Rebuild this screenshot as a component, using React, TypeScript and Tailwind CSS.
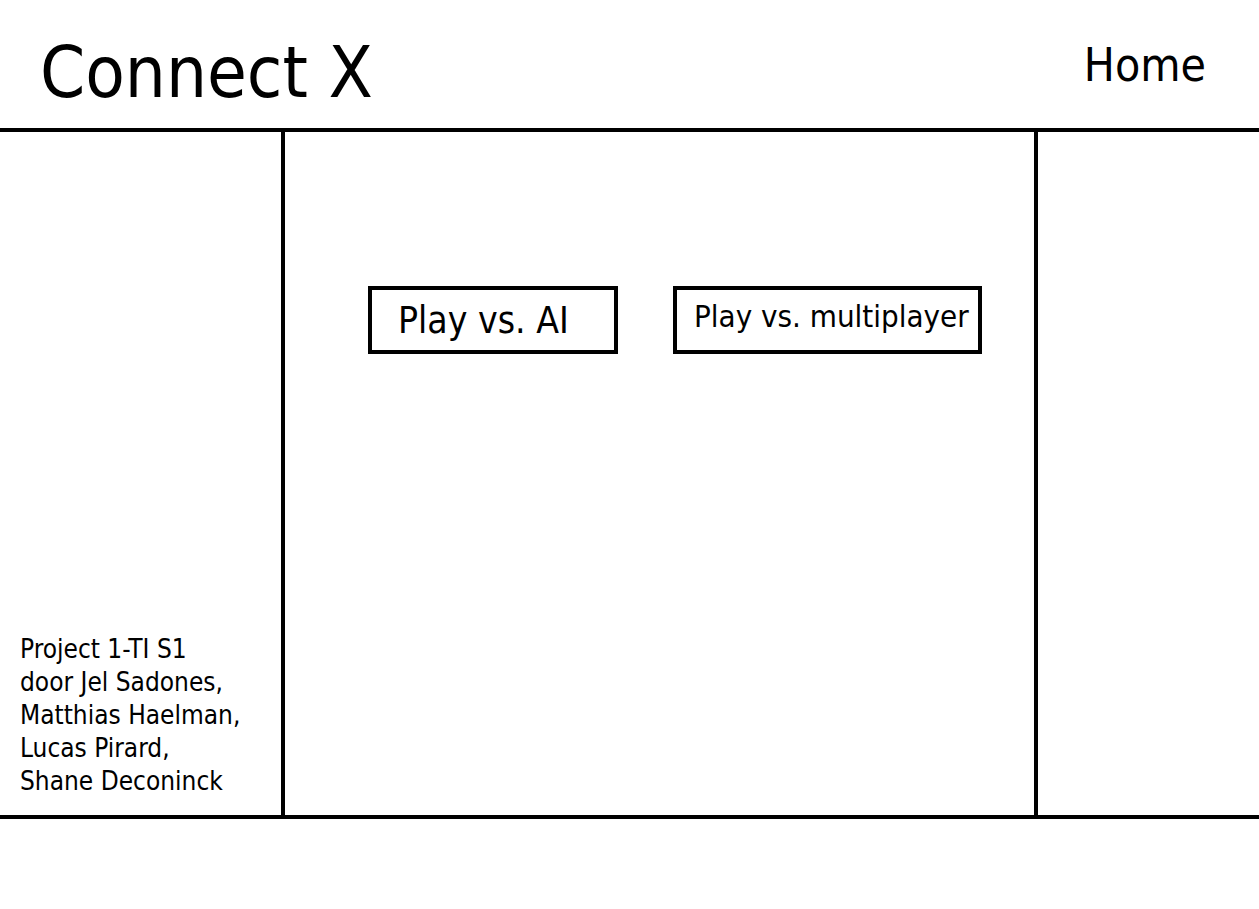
const font = { fontFamily: '"DejaVu Sans Condensed", "DejaVu Sans", Tahoma, sans-serif' };

function PlayButton({ label, className }: { label: string; className: string }) {
  return (
    <button className={`border-4 border-black bg-white text-left text-black whitespace-nowrap ${className}`}>
      {label}
    </button>
  );
}

export default function App() {
  return (
    <div className="w-[1259px] h-[909px] bg-white text-black" style={font}>
      <header className="h-[132px] border-b-4 border-black flex justify-between">
        <h1 className="pl-[40px] pt-[36px] text-[72px] leading-[72px] font-normal">Connect X</h1>
        <nav className="pr-[53px] pt-[42px] text-[46px] leading-[46px]">
          <a href="#">Home</a>
        </nav>
      </header>

      <main className="h-[687px] border-b-4 border-black flex">
        <aside className="w-[285px] border-r-4 border-black flex flex-col justify-end pl-[20px] pb-[17px]">
          <p className="text-[26px] leading-[33px]">
            Project 1-TI S1
            <br />
            door Jel Sadones,
            <br />
            Matthias Haelman,
            <br />
            Lucas Pirard,
            <br />
            Shane Deconinck
          </p>
        </aside>

        <section className="w-[753px] border-r-4 border-black flex items-start gap-[55px] pl-[83px] pt-[154px]">
          <PlayButton
            label="Play vs. AI"
            className="w-[250px] h-[68px] pl-[26px] pt-[12px] text-[37px] leading-[37px] flex items-start"
          />
          <PlayButton
            label="Play vs. multiplayer"
            className="w-[309px] h-[68px] pl-[17px] pt-[11px] text-[31px] leading-[31px] flex items-start"
          />
        </section>

        <section className="flex-1" />
      </main>
    </div>
  );
}
